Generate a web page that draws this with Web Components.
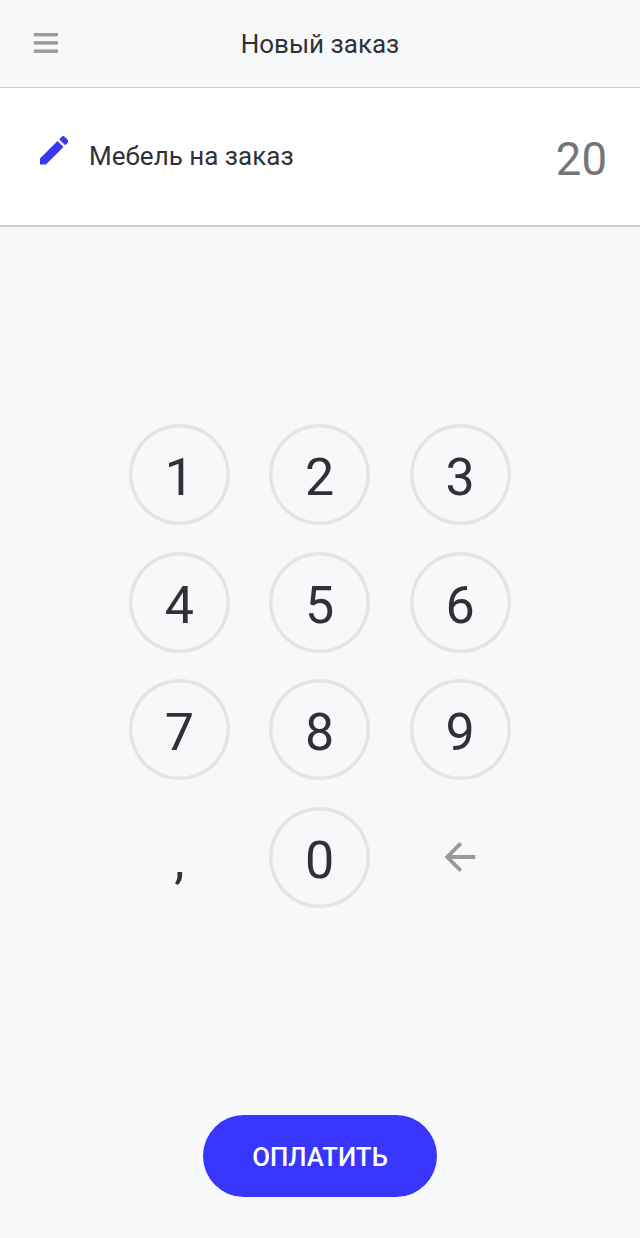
<!DOCTYPE html>
<html lang="ru">
<head>
<meta charset="utf-8">
<title>Новый заказ</title>
<style>
    html, body {
        height: 100%;
        margin: 0;
    }
    body {
        font-family: Roboto, "Liberation Sans", sans-serif;
        color: #303136;
        background: #f7f8fa;
    }
</style>
</head>
<body>
<order-screen></order-screen>

<script>
// Шапка: меню слева, заголовок по центру
class AppHeader extends HTMLElement {
    constructor() {
        super();
        this.attachShadow({ mode: 'open' });
        this.shadowRoot.innerHTML = `
            <style>
                :host {
                    display: grid;
                    grid-template-columns: 92px 1fr 92px;
                    align-items: center;
                    box-sizing: border-box;
                    height: 88px;
                    border-bottom: 1.5px solid #cbcbcd;
                }
                svg {
                    display: block;
                    margin: 0 0 1px 34px;
                }
                h1 {
                    margin: 0;
                    padding-top: 1px;
                    font-size: 26px;
                    font-weight: 400;
                    line-height: 30px;
                    text-align: center;
                }
            </style>
            <svg width="24" height="20" viewBox="0 0 24 20" fill="#999a9c">
                <rect y="0" width="24" height="3.4"/>
                <rect y="8.2" width="24" height="3.4"/>
                <rect y="16.5" width="24" height="3.4"/>
            </svg>
            <h1><slot></slot></h1>
        `;
    }
}
customElements.define('app-header', AppHeader);

// Строка заказа: название и сумма
class OrderRow extends HTMLElement {
    constructor() {
        super();
        this.attachShadow({ mode: 'open' });
        this.shadowRoot.innerHTML = `
            <style>
                :host {
                    display: flex;
                    align-items: center;
                    box-sizing: border-box;
                    height: 139px;
                    padding: 0 33px 0 39.5px;
                    background: #fff;
                    border-bottom: 2px solid #cfcfd1;
                }
                svg {
                    flex: none;
                    margin: 0 21px 12px 0;
                }
                .name {
                    flex: 1;
                    padding-bottom: 2px;
                    font-size: 26px;
                    line-height: 30px;
                }
                .sum {
                    padding-top: 7px;
                    font-size: 45.5px;
                    line-height: 54px;
                    color: #757575;
                }
            </style>
            <svg width="28.5" height="28.5" viewBox="3 3 18 18" fill="#3a36f0">
                <path d="M3 17.25V21h3.75L17.81 9.94l-3.75-3.75L3 17.25zM20.71 7.04a1 1 0 0 0 0-1.41l-2.34-2.34a1 1 0 0 0-1.41 0l-1.83 1.83 3.75 3.75 1.83-1.83z"/>
            </svg>
            <div class="name"><slot></slot></div>
            <div class="sum"><slot name="sum"></slot></div>
        `;
    }
}
customElements.define('order-row', OrderRow);

// Кнопка клавиатуры, с атрибутом plain рисуется без круга
class PadKey extends HTMLElement {
    constructor() {
        super();
        this.attachShadow({ mode: 'open' });
        this.shadowRoot.innerHTML = `
            <style>
                :host {
                    display: flex;
                    align-items: center;
                    justify-content: center;
                    width: 101px;
                    height: 101px;
                    border-radius: 50%;
                    box-shadow: inset 0 0 0 3.5px #e3e4e6;
                    font-size: 52px;
                    line-height: 60px;
                }
                :host([plain]) {
                    box-shadow: none;
                }
                span {
                    padding-top: 7px;
                }
            </style>
            <span><slot></slot></span>
        `;
    }
}
customElements.define('pad-key', PadKey);

class BackIcon extends HTMLElement {
    constructor() {
        super();
        this.attachShadow({ mode: 'open' });
        this.shadowRoot.innerHTML = `
            <style>
                :host {
                    display: block;
                    margin: -7px 0 0;
                }
                svg {
                    display: block;
                }
            </style>
            <svg width="32" height="32" viewBox="0 0 32 32" fill="none" stroke="#98999b" stroke-width="3.8">
                <path d="M31.3 16H4M16.8 2.3L3.2 16l13.6 13.7"/>
            </svg>
        `;
    }
}
customElements.define('back-icon', BackIcon);

class NumPad extends HTMLElement {
    constructor() {
        super();
        this.attachShadow({ mode: 'open' });
        const keys = [1, 2, 3, 4, 5, 6, 7, 8, 9]
            .map((n) => `<pad-key>${n}</pad-key>`)
            .join('');
        this.shadowRoot.innerHTML = `
            <style>
                :host {
                    display: grid;
                    grid-template-columns: repeat(3, 101px);
                    justify-content: center;
                    gap: 26.4px 39.4px;
                }
            </style>
            ${keys}
            <pad-key plain>,</pad-key>
            <pad-key>0</pad-key>
            <pad-key plain><back-icon></back-icon></pad-key>
        `;
    }
}
customElements.define('num-pad', NumPad);

class PayButton extends HTMLElement {
    constructor() {
        super();
        this.attachShadow({ mode: 'open' });
        this.shadowRoot.innerHTML = `
            <style>
                :host {
                    display: block;
                }
                button {
                    display: block;
                    width: 234px;
                    height: 82px;
                    padding: 2px 0 0;
                    border: 0;
                    border-radius: 41px;
                    background: #3835fd;
                    color: #fff;
                    font: 500 25.8px/30px Roboto, "Liberation Sans", sans-serif;
                }
            </style>
            <button type="button"><slot></slot></button>
        `;
    }
}
customElements.define('pay-button', PayButton);

class OrderScreen extends HTMLElement {
    constructor() {
        super();
        this.attachShadow({ mode: 'open' });
        this.shadowRoot.innerHTML = `
            <style>
                :host {
                    display: flex;
                    flex-direction: column;
                    box-sizing: border-box;
                    height: 100%;
                }
                num-pad {
                    margin: 197.4px 0.6px 0 0;
                }
                pay-button {
                    margin: auto auto 41px;
                }
            </style>
            <app-header>Новый заказ</app-header>
            <order-row>Мебель на заказ<span slot="sum">20</span></order-row>
            <num-pad></num-pad>
            <pay-button>ОПЛАТИТЬ</pay-button>
        `;
    }
}
customElements.define('order-screen', OrderScreen);
</script>
</body>
</html>
